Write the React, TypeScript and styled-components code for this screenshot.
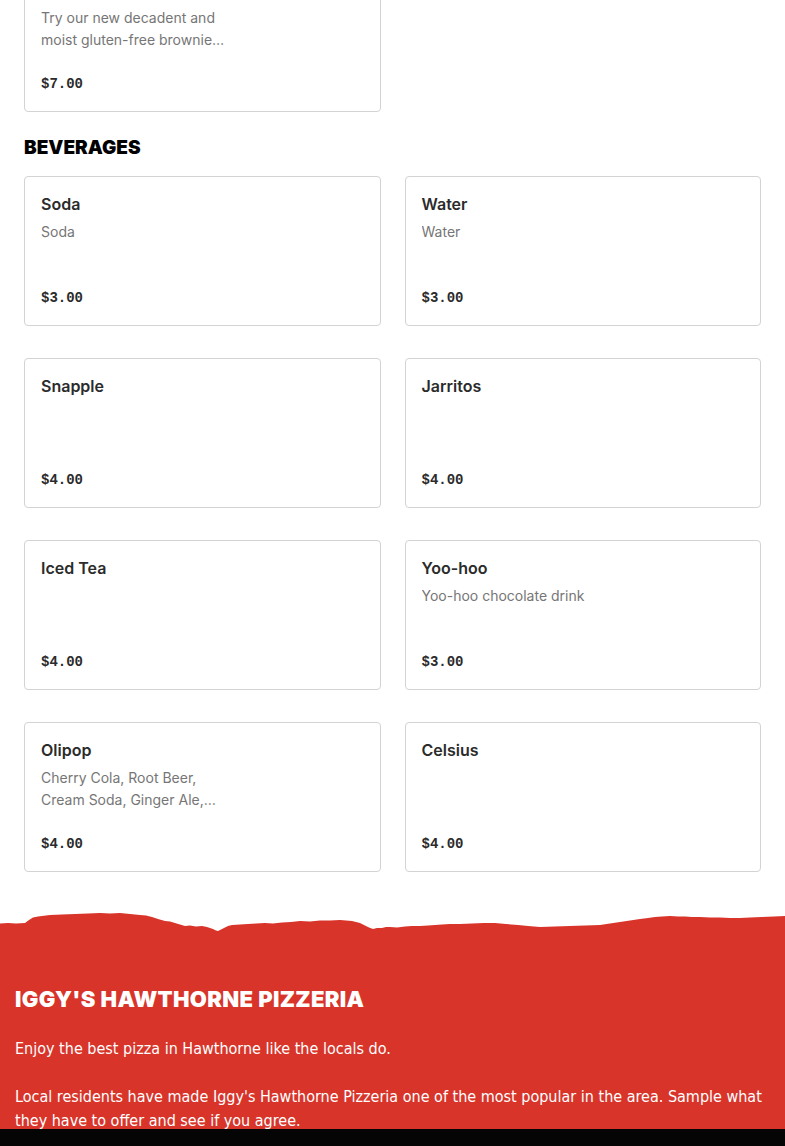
import styled, { createGlobalStyle } from "styled-components";

type Item = {
  name: string;
  description?: string;
  price: string;
};

const beverages: Item[] = [
  { name: "Soda", description: "Soda", price: "$3.00" },
  { name: "Water", description: "Water", price: "$3.00" },
  { name: "Snapple", price: "$4.00" },
  { name: "Jarritos", price: "$4.00" },
  { name: "Iced Tea", price: "$4.00" },
  { name: "Yoo-hoo", description: "Yoo-hoo chocolate drink", price: "$3.00" },
  {
    name: "Olipop",
    description:
      "Cherry Cola, Root Beer, Cream Soda, Ginger Ale, Vintage Cola, Strawberry Vanilla",
    price: "$4.00",
  },
  { name: "Celsius", price: "$4.00" },
];

const GlobalStyle = createGlobalStyle`
  html, body {
    margin: 0;
    padding: 0;
    background: #ffffff;
    overflow: hidden;
  }
  body {
    font-family: Inter, "Noto Sans", sans-serif;
    color: #2b2b2b;
  }
`;

const MenuCard = ({ name, description, price }: Item) => (
  <Card>
    <CardTitle>{name}</CardTitle>
    {description && <CardDescription>{description}</CardDescription>}
    <CardPrice>{price}</CardPrice>
  </Card>
);

const TornEdge = () => (
  <EdgeSvg viewBox="0 0 785 22" preserveAspectRatio="none">
    <path
      fill="#d8342a"
      d="M0 13.5 L8 13 L16 13.5 L25 13 L29 10 L33 7.5 L38 6.5 L42 6 L50 5 L62 4.5 L75 4 L88 3.5 L100 3 L110 3.5 L120 3 L130 4 L140 5 L146 5.5 L152 7 L158 9 L165 11 L170 11.5 L175 13 L180 14.5 L185 16 L190 15.5 L196 16.5 L202 16 L207 17 L210 18 L213 19 L216 20.5 L218 21 L221 19.5 L224 18 L228 16 L232 15 L240 14.5 L248 14 L256 13.5 L265 13 L273 13.5 L282 12.5 L291 12 L300 11 L310 11.5 L320 10.5 L330 10.5 L340 10 L346 10.5 L352 11 L356 12 L360 13 L363 14.5 L366 16 L369 17.5 L373 19 L377 18 L382 18 L386 17 L390 17 L397 17.5 L405 16.5 L412 16 L420 16 L428 15.5 L435 15 L442 14.5 L450 14 L460 14 L472 13.5 L484 13 L495 13 L506 14 L518 15 L528 16 L540 17 L555 16.5 L570 16 L585 15.5 L600 15 L610 13.5 L620 12 L630 10.5 L640 9 L648 8 L655 7 L662 6.5 L670 6 L678 6.5 L685 6.5 L692 7 L700 7 L710 7.5 L720 7.5 L730 8 L740 8 L750 7.5 L762 7 L774 6.5 L785 6 L785 22 L0 22 Z"
    />
  </EdgeSvg>
);

export default function App() {
  return (
    <>
      <GlobalStyle />
      <Page>
        <Section>
          <CardGrid>
            <MenuCard
              name="Gluten-Free Brownie"
              description="Try our new decadent and moist gluten-free brownie made fresh in house every day."
              price="$7.00"
            />
          </CardGrid>
        </Section>

        <Section>
          <SectionHeading>BEVERAGES</SectionHeading>
          <CardGrid>
            {beverages.map((item) => (
              <MenuCard key={item.name} {...item} />
            ))}
          </CardGrid>
        </Section>

        <Footer>
          <TornEdge />
          <FooterBody>
            <FooterTitle>IGGY'S HAWTHORNE PIZZERIA</FooterTitle>
            <FooterText>Enjoy the best pizza in Hawthorne like the locals do.</FooterText>
            <FooterText>
              Local residents have made Iggy's Hawthorne Pizzeria one of the most
              popular in the area. Sample what they have to offer and see if you
              agree.
            </FooterText>
          </FooterBody>
        </Footer>
      </Page>
      <BottomBar />
    </>
  );
}

const Page = styled.div`
  margin-top: -38px;
  display: flex;
  flex-direction: column;
`;

const Section = styled.section`
  display: flex;
  flex-direction: column;
  padding: 0 24px;
`;

const SectionHeading = styled.h2`
  margin: 24px 0 16px;
  font-family: Inter, "Liberation Sans", sans-serif;
  font-weight: 900;
  font-size: 19px;
  line-height: 24px;
  color: #000000;
`;

const CardGrid = styled.div`
  display: grid;
  grid-template-columns: 1fr 1fr;
  column-gap: 24px;
  row-gap: 32px;
`;

const Card = styled.div`
  display: flex;
  flex-direction: column;
  height: 150px;
  box-sizing: border-box;
  padding: 16px 16px 15px;
  border: 1px solid #d3d3d3;
  border-radius: 4px;
  background: #ffffff;
`;

const CardTitle = styled.div`
  font-family: Inter, "Noto Sans", sans-serif;
  font-weight: 600;
  font-size: 16px;
  line-height: 22px;
  color: #2b2b2b;
`;

const CardDescription = styled.div`
  margin-top: 6px;
  max-width: 192px;
  font-family: Inter, "Noto Sans", sans-serif;
  font-size: 14px;
  line-height: 22px;
  color: #767676;
  display: -webkit-box;
  -webkit-line-clamp: 2;
  -webkit-box-orient: vertical;
  overflow: hidden;
`;

const CardPrice = styled.div`
  margin-top: auto;
  font-family: "Liberation Mono", "DejaVu Sans Mono", monospace;
  font-weight: 700;
  font-size: 14px;
  line-height: 24px;
  color: #2b2b2b;
`;

const Footer = styled.footer`
  margin-top: 38px;
  display: flex;
  flex-direction: column;
`;

const EdgeSvg = styled.svg`
  display: block;
  width: 100%;
  height: 22px;
  margin-bottom: -1px;
`;

const FooterBody = styled.div`
  background: #d8342a;
  padding: 54px 15px 40px;
  display: flex;
  flex-direction: column;
  gap: 24px;
  color: #ffffff;
`;

const FooterTitle = styled.h3`
  margin: 0;
  font-family: Inter, "Liberation Sans", sans-serif;
  font-weight: 900;
  font-size: 22px;
  line-height: 28px;
  letter-spacing: 0.35px;
  color: #ffffff;
`;

const FooterText = styled.p`
  margin: 0;
  font-family: "Liberation Sans Narrow", "DejaVu Sans Condensed", "Roboto Condensed", sans-serif;
  font-stretch: condensed;
  font-weight: 500;
  font-size: 16px;
  line-height: 24px;
  color: #ffffff;
`;

const BottomBar = styled.div`
  position: fixed;
  left: 0;
  right: 0;
  bottom: 0;
  height: 17px;
  background: #050505;
`;
